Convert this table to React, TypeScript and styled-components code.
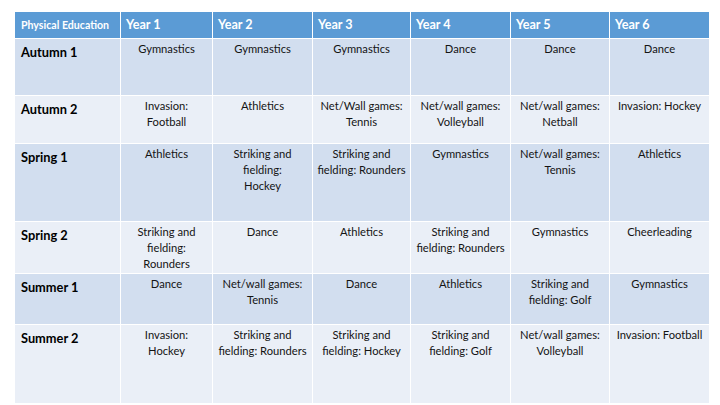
import React from "react";
import styled, { createGlobalStyle } from "styled-components";

const Global = createGlobalStyle`
  html, body { margin: 0; padding: 0; background: #ffffff; }
  body { font-family: Lato, "Open Sans", sans-serif; }
`;

const Page = styled.div`
  width: 720px;
  height: 405px;
  padding: 12px 0 0 15px;
  box-sizing: border-box;
  background: #ffffff;
`;

const Grid = styled.div`
  display: grid;
  grid-template-columns: 105px 91px 99px 97px 99px 98px 99px;
  grid-template-rows: 26px 56px 47px 77px 51px 50px 78px;
  column-gap: 1px;
  row-gap: 1px;
  width: max-content;
  background: #ffffff;
`;

const HeadCell = styled.div<{ $small?: boolean }>`
  background: #5b9bd5;
  color: #ffffff;
  font-weight: 700;
  font-size: ${(p) => (p.$small ? "10.6px" : "12.6px")};
  padding: ${(p) => (p.$small ? "5px 4px 0 6px" : "4px 5px 0 5px")};
  line-height: 17px;
  white-space: nowrap;
`;

const LabelCell = styled.div<{ $odd: boolean }>`
  background: ${(p) => (p.$odd ? "#d2deef" : "#eaeff7")};
  color: #000000;
  font-weight: 700;
  font-size: 12.8px;
  line-height: 16px;
  padding: 5px 4px 0 6px;
`;

const BodyCell = styled.div<{ $odd: boolean }>`
  background: ${(p) => (p.$odd ? "#d2deef" : "#eaeff7")};
  color: #141414;
  font-size: 11.2px;
  line-height: 16px;
  text-align: center;
  padding: 2px 1px 0 1px;
  white-space: nowrap;
`;

const headers = ["Year 1", "Year 2", "Year 3", "Year 4", "Year 5", "Year 6"];

const rows: { label: string; cells: string[][] }[] = [
  {
    label: "Autumn 1",
    cells: [["Gymnastics"], ["Gymnastics"], ["Gymnastics"], ["Dance"], ["Dance"], ["Dance"]],
  },
  {
    label: "Autumn 2",
    cells: [
      ["Invasion:", "Football"],
      ["Athletics"],
      ["Net/Wall games:", "Tennis"],
      ["Net/wall games:", "Volleyball"],
      ["Net/wall games:", "Netball"],
      ["Invasion: Hockey"],
    ],
  },
  {
    label: "Spring 1",
    cells: [
      ["Athletics"],
      ["Striking and", "fielding:", "Hockey"],
      ["Striking and", "fielding: Rounders"],
      ["Gymnastics"],
      ["Net/wall games:", "Tennis"],
      ["Athletics"],
    ],
  },
  {
    label: "Spring 2",
    cells: [
      ["Striking and", "fielding:", "Rounders"],
      ["Dance"],
      ["Athletics"],
      ["Striking and", "fielding: Rounders"],
      ["Gymnastics"],
      ["Cheerleading"],
    ],
  },
  {
    label: "Summer 1",
    cells: [
      ["Dance"],
      ["Net/wall games:", "Tennis"],
      ["Dance"],
      ["Athletics"],
      ["Striking and", "fielding: Golf"],
      ["Gymnastics"],
    ],
  },
  {
    label: "Summer 2",
    cells: [
      ["Invasion:", "Hockey"],
      ["Striking and", "fielding: Rounders"],
      ["Striking and", "fielding: Hockey"],
      ["Striking and", "fielding: Golf"],
      ["Net/wall games:", "Volleyball"],
      ["Invasion: Football"],
    ],
  },
];

export default function App() {
  return (
    <>
      <Global />
      <Page>
        <Grid>
          <HeadCell $small>Physical Education</HeadCell>
          {headers.map((h) => (
            <HeadCell key={h}>{h}</HeadCell>
          ))}
          {rows.map((r, i) => (
            <React.Fragment key={r.label}>
              <LabelCell $odd={i % 2 === 0}>{r.label}</LabelCell>
              {r.cells.map((lines, j) => (
                <BodyCell key={j} $odd={i % 2 === 0}>
                  {lines.map((l, k) => (
                    <div key={k}>{l}</div>
                  ))}
                </BodyCell>
              ))}
            </React.Fragment>
          ))}
        </Grid>
      </Page>
    </>
  );
}
